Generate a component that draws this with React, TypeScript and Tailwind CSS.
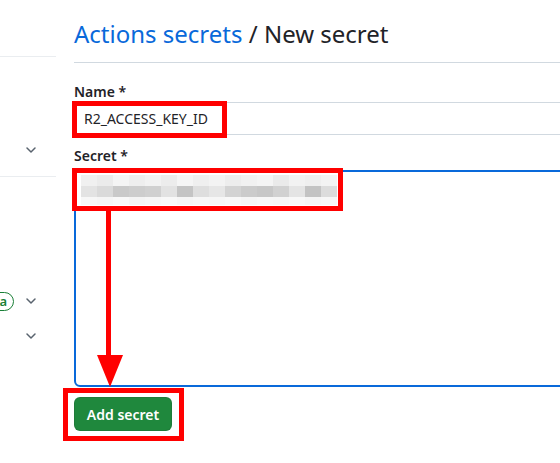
import React from 'react';

const FONT = "font-['Noto_Sans','Open_Sans',sans-serif]";

// pixelated blur over the pasted secret value
const MOSAIC_ROWS: { h: string; cells: string[] }[] = [
  {
    h: 'h-[11px]',
    cells: [
      'bg-[#f0f0f0]', 'bg-[#ebebeb]', 'bg-[#f4f4f4]', 'bg-[#eeeeee]', 'bg-[#f2f2f2]', 'bg-[#ececec]',
      'bg-[#f5f5f5]', 'bg-[#efefef]', 'bg-[#f3f3f3]', 'bg-[#ededed]', 'bg-[#f1f1f1]', 'bg-[#f4f4f4]',
      'bg-[#eaeaea]', 'bg-[#f2f2f2]', 'bg-[#efefef]', 'bg-[#f3f3f3]',
    ],
  },
  {
    h: 'h-[11px]',
    cells: [
      'bg-[#e3e3e3]', 'bg-[#dadada]', 'bg-[#c9c9c9]', 'bg-[#cdcdcd]', 'bg-[#d0d0d0]', 'bg-[#e2e2e2]',
      'bg-[#c4c4c4]', 'bg-[#dedede]', 'bg-[#e6e6e6]', 'bg-[#d3d3d3]', 'bg-[#cbcbcb]', 'bg-[#c7c7c7]',
      'bg-[#d1d1d1]', 'bg-[#e4e4e4]', 'bg-[#c3c3c3]', 'bg-[#dcdcdc]',
    ],
  },
  {
    h: 'h-[8px]',
    cells: [
      'bg-[#f7f7f7]', 'bg-[#f5f5f5]', 'bg-[#f8f8f8]', 'bg-[#f4f4f4]', 'bg-[#f6f6f6]', 'bg-[#f8f8f8]',
      'bg-[#f5f5f5]', 'bg-[#f7f7f7]', 'bg-[#f6f6f6]', 'bg-[#f8f8f8]', 'bg-[#f5f5f5]', 'bg-[#f7f7f7]',
      'bg-[#f6f6f6]', 'bg-[#f8f8f8]', 'bg-[#f5f5f5]', 'bg-[#f7f7f7]',
    ],
  },
];

function Chevron() {
  return (
    <svg width="16" height="16" viewBox="0 0 16 16" className="shrink-0">
      <polyline points="4,6 8,10 12,6" fill="none" stroke="#59636e" strokeWidth="1.5" strokeLinecap="round" strokeLinejoin="round" />
    </svg>
  );
}

function Sidebar() {
  return (
    <aside className="w-14 shrink-0 overflow-hidden">
      <div className="h-[57px] border-b border-[#eaedf0]" />
      <div className="flex h-[120px] justify-end border-b border-[#eaedf0] pt-[85px] pr-[17px]">
        <Chevron />
      </div>
      <div className="mt-[114px] flex h-[20px] items-center justify-end gap-[9px] pr-[17px]">
        <span className="shrink-0 rounded-full border border-[#1a7f37] px-[6px] text-[13px] leading-[17px] font-semibold text-[#1a7f37]">
          Beta
        </span>
        <Chevron />
      </div>
      <div className="mt-[15px] flex h-[20px] items-center justify-end pr-[17px]">
        <Chevron />
      </div>
    </aside>
  );
}

export default function App() {
  return (
    <div className={`relative flex h-[463px] w-[560px] overflow-hidden bg-white ${FONT}`}>
      <Sidebar />

      <main className="ml-[18px] w-[520px] shrink-0 text-[#1f2328]">
        <h1 className="border-b border-[#d1d9e0] pt-[18px] pb-[12px] text-[24px] leading-[32px] font-normal">
          <span className="text-[#0969da]">Actions secrets</span> / New secret
        </h1>

        <label className="mt-[19px] block text-[14px] leading-[20px] font-semibold">Name *</label>
        <div className="relative">
          <div className="flex h-[33px] items-center border border-[#d1d9e0] px-[9px] text-[14px]">
            R2_ACCESS_KEY_ID
          </div>
          <div className="absolute top-[-1px] left-[-2px] h-[37px] w-[155px] border-[5px] border-[#ff0000]" />
        </div>

        <label className="mt-[11px] block text-[14px] leading-[20px] font-semibold">Secret *</label>
        <div className="relative mt-[4px]">
          <div className="h-[217px] rounded-md border-2 border-[#0969da] pt-[3px] pl-[5px]">
            <div className="flex w-[256px] flex-col">
              {MOSAIC_ROWS.map((row, i) => (
                <div key={i} className={`flex ${row.h}`}>
                  {row.cells.map((c, j) => (
                    <div key={j} className={`h-full w-[16px] ${c}`} />
                  ))}
                </div>
              ))}
            </div>
          </div>
          <div className="absolute top-[-2px] left-[-2px] h-[43px] w-[271px] border-[5px] border-[#ff0000]" />
        </div>

        <div className="relative mt-[10px] w-fit">
          <button
            type="button"
            className="h-[34px] w-[98px] rounded-md border border-[#1f23281f] bg-[#1f883d] text-[14px] font-semibold text-white"
          >
            Add secret
          </button>
          <div className="absolute top-[-9px] left-[-11px] h-[53px] w-[121px] border-[5px] border-[#ff0000]" />
        </div>
      </main>

      {/* annotation arrow */}
      <svg className="pointer-events-none absolute top-0 left-0" width="560" height="463">
        <rect x="106" y="209" width="5" height="148" fill="#ff0000" />
        <polygon points="97,355 123,355 110,387" fill="#ff0000" />
      </svg>
    </div>
  );
}
